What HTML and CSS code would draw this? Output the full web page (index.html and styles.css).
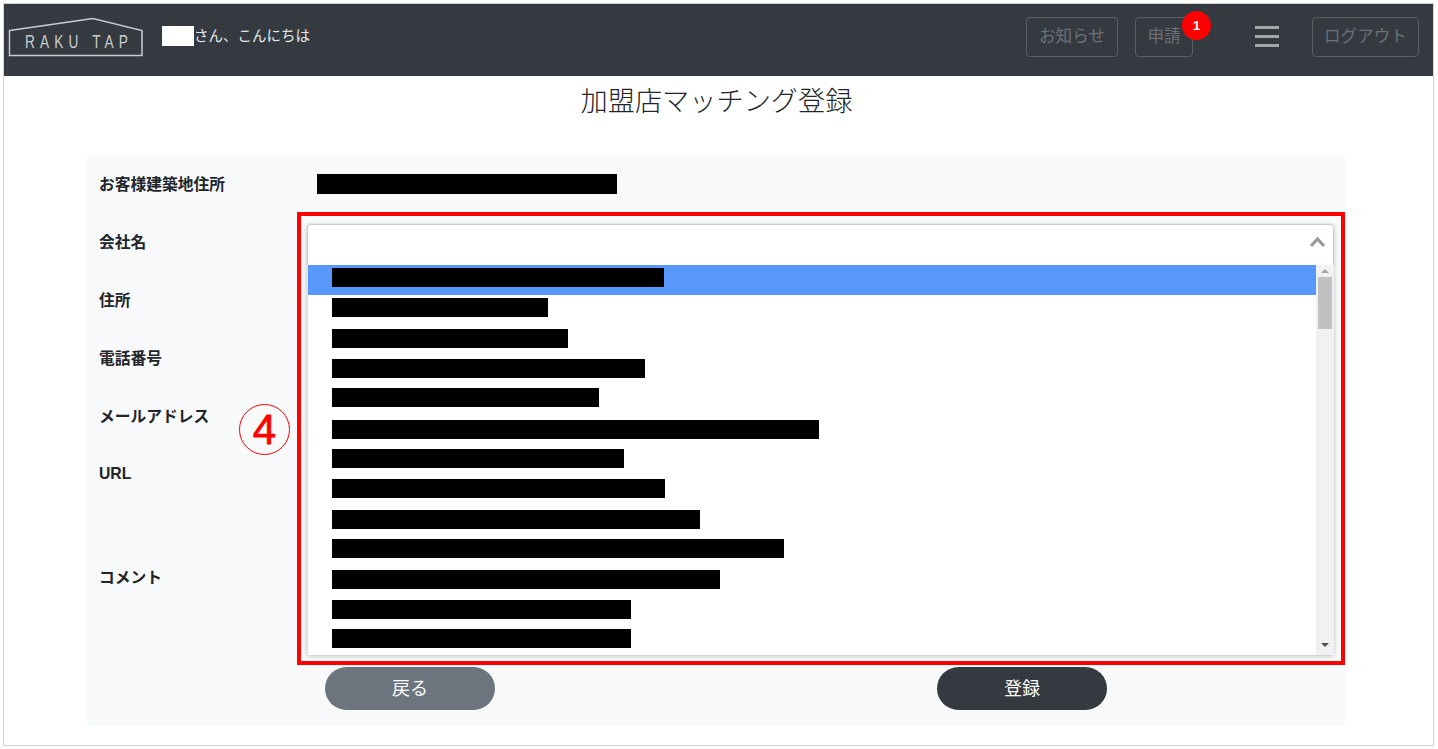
FILE: index.html
```html
<!DOCTYPE html>
<html lang="ja">
<head>
    <meta charset="UTF-8">
    <title>加盟店マッチング登録 - RAKU TAP</title>
    <link rel="stylesheet" href="styles.css">
</head>
<body>
    <div class="page">
        <header class="navbar">
            <svg class="logo" width="136" height="40" viewBox="0 0 136 40">
                <polygon points="1.5,13.5 85,1.5 134,13.5 134,38.5 1.5,38.5" fill="none" stroke="#c9cccf" stroke-width="1.5"/>
                <text transform="translate(17 31) scale(0.72 1)" class="logo-text" textLength="143" lengthAdjust="spacing">RAKU TAP</text>
            </svg>
            <div class="greeting"><span class="name-mask"></span><span class="greeting-text">さん、こんにちは</span></div>
            <div class="nav-actions">
                <a class="nav-btn nav-btn-notice">お知らせ</a>
                <a class="nav-btn nav-btn-apply">申請<span class="badge">1</span></a>
                <div class="hamburger"><span></span><span></span><span></span></div>
                <a class="nav-btn nav-btn-logout">ログアウト</a>
            </div>
        </header>

        <main class="content">
            <h1 class="title">加盟店マッチング登録</h1>
            <div class="panel">
                <div class="form-row">
                    <label>お客様建築地住所</label>
                    <span class="redact redact-address"></span>
                </div>
                <div class="form-row"><label>会社名</label></div>
                <div class="form-row"><label>住所</label></div>
                <div class="form-row"><label>電話番号</label></div>
                <div class="form-row"><label>メールアドレス</label></div>
                <div class="form-row"><label>URL</label></div>
                <div class="form-row form-row-comment"><label>コメント</label></div>
                <div class="form-buttons">
                    <button type="button" class="btn btn-back">戻る</button>
                    <button type="button" class="btn btn-submit">登録</button>
                </div>

                <span class="step-mark">4</span>

                <div class="highlight-box">
                    <div class="select">
                        <div class="select-head">
                            <svg width="17" height="12" viewBox="0 0 17 12">
                                <path d="M2 10 L8.5 3 L15 10" fill="none" stroke="#999" stroke-width="3.2"/>
                            </svg>
                        </div>
                        <div class="select-body">
                            <ul class="options">
                                <li class="selected"><span class="redact" style="width:332px;margin-top:3px"></span></li>
                                <li><span class="redact" style="width:216px;margin-top:3px"></span></li>
                                <li><span class="redact" style="width:236px;margin-top:4px"></span></li>
                                <li><span class="redact" style="width:313px;margin-top:4px"></span></li>
                                <li><span class="redact" style="width:267px;margin-top:3px"></span></li>
                                <li><span class="redact" style="width:487px;margin-top:5px"></span></li>
                                <li><span class="redact" style="width:292px;margin-top:4px"></span></li>
                                <li><span class="redact" style="width:333px;margin-top:4px"></span></li>
                                <li><span class="redact" style="width:368px;margin-top:5px"></span></li>
                                <li><span class="redact" style="width:452px;margin-top:4px"></span></li>
                                <li><span class="redact" style="width:388px;margin-top:5px"></span></li>
                                <li><span class="redact" style="width:299px;margin-top:5px"></span></li>
                                <li><span class="redact" style="width:299px;margin-top:4px"></span></li>
                            </ul>
                            <div class="scrollbar">
                                <span class="arrow-up"></span>
                                <span class="thumb"></span>
                                <span class="arrow-down"></span>
                            </div>
                        </div>
                    </div>
                </div>
            </div>
        </main>
    </div>
</body>
</html>
```

FILE: styles.css
```css
* {
    box-sizing: border-box;
}

body {
    margin: 0;
    background-color: #fff;
    font-family: "Liberation Sans", "Noto Sans CJK JP", sans-serif;
    color: #212529;
}

.page {
    width: 1431px;
    height: 743px;
    margin: 3px 0 0 3px;
    border: 1px solid #d2d2d2;
    overflow: hidden;
}

.navbar {
    display: flex;
    align-items: flex-start;
    height: 72px;
    padding: 13px 14px 0 4px;
    background-color: #343a40;
}

.logo {
    display: block;
}

.logo-text {
    font-family: "Liberation Sans", sans-serif;
    font-size: 19px;
    fill: #c9cccf;
}

.greeting {
    display: flex;
    align-items: center;
    height: 20px;
    margin-left: 18px;
    margin-top: 9px;
    font-size: 14.5px;
    color: #e4e8ec;
}

.greeting-text {
    margin-top: -3px;
}

.name-mask {
    display: block;
    width: 32px;
    height: 20px;
    background-color: #fff;
}

.nav-actions {
    display: flex;
    align-items: center;
    margin-left: auto;
}

.nav-btn {
    position: relative;
    display: flex;
    align-items: center;
    justify-content: center;
    height: 40px;
    padding-bottom: 4px;
    border: 1px solid #5a6066;
    border-radius: 4px;
    font-size: 16.6px;
    color: #6b7177;
}

.nav-btn-notice {
    width: 92px;
}

.nav-btn-apply {
    width: 58px;
    margin-left: 17px;
}

.nav-btn-logout {
    width: 107px;
}

.badge {
    position: absolute;
    top: -7px;
    left: 46px;
    width: 29px;
    height: 29px;
    border-radius: 50%;
    background-color: #f00;
    color: #fff;
    font-size: 13px;
    font-weight: bold;
    line-height: 29px;
    text-align: center;
}

.hamburger {
    display: flex;
    flex-direction: column;
    gap: 6px;
    width: 24px;
    margin: -2px 33px 0 62px;
}

.hamburger span {
    display: block;
    height: 3px;
    background-color: #a5a8ab;
}

.title {
    height: 50px;
    margin: 0 0 29px;
    padding-right: 4px;
    font-size: 27.2px;
    font-weight: 300;
    line-height: 52px;
    text-align: center;
}

.panel {
    position: relative;
    width: 1258px;
    height: 571px;
    margin-left: 83px;
    background-color: #f8f9fa;
    border-radius: 4px;
}

.form-row {
    display: flex;
    align-items: center;
    height: 58px;
    padding-left: 12px;
}

.form-row label {
    width: 218px;
    margin-top: -1px;
    font-size: 15.75px;
    font-weight: bold;
}

.form-row-comment {
    height: 148px;
}

.redact {
    display: block;
    height: 19px;
    background-color: #000;
}

.redact-address {
    width: 300px;
    height: 20px;
    margin-top: -1px;
}

.form-buttons {
    display: flex;
    gap: 442px;
    margin-top: 16px;
    padding-left: 238px;
}

.btn {
    width: 170px;
    height: 43px;
    padding: 0 0 4px;
    border: none;
    border-radius: 22px;
    font-family: inherit;
    font-size: 18px;
    color: #fff;
}

.btn-back {
    background-color: #6c757d;
}

.btn-submit {
    background-color: #343a40;
}

.step-mark {
    position: absolute;
    left: 152px;
    top: 249px;
    width: 51px;
    height: 51px;
    border: 1px solid #f00;
    border-radius: 50%;
    color: #f00;
    font-size: 42px;
    line-height: 49px;
    text-align: center;
    -webkit-text-stroke: 0.8px #f00;
}

.highlight-box {
    position: absolute;
    left: 210px;
    top: 57px;
    width: 1048px;
    height: 453px;
    padding: 8px 7px 6px 6px;
    border: 4px solid #f00;
}

.select {
    height: 431px;
    border-radius: 4px;
    box-shadow: 0 1px 4px rgba(0, 0, 0, 0.25);
}

.select-head {
    display: flex;
    align-items: center;
    justify-content: flex-end;
    height: 41px;
    padding: 0 7px 6px 0;
    background-color: #fff;
    border: 1px solid #ccc;
    border-bottom: none;
    border-radius: 4px 4px 0 0;
}

.select-body {
    display: flex;
    height: 390px;
    background-color: #fff;
    border-left: 1px solid #e4e4e4;
}

.options {
    flex: 1;
    margin: 0;
    padding: 0;
    list-style-type: none;
}

.options li {
    height: 30px;
    padding-left: 24px;
    overflow: hidden;
}

.options li.selected {
    background-color: #5897fb;
}

.scrollbar {
    display: flex;
    flex-direction: column;
    align-items: center;
    width: 18px;
    background-color: #f1f1f1;
}

.thumb {
    width: 14px;
    height: 52px;
    margin-top: 4px;
    background-color: #c1c1c1;
}

.arrow-up,
.arrow-down {
    width: 0;
    height: 0;
    border-left: 4px solid transparent;
    border-right: 4px solid transparent;
}

.arrow-up {
    margin-top: 4px;
    border-bottom: 4px solid #a3a3a3;
}

.arrow-down {
    margin-top: auto;
    margin-bottom: 8px;
    border-top: 4px solid #505050;
}
```
